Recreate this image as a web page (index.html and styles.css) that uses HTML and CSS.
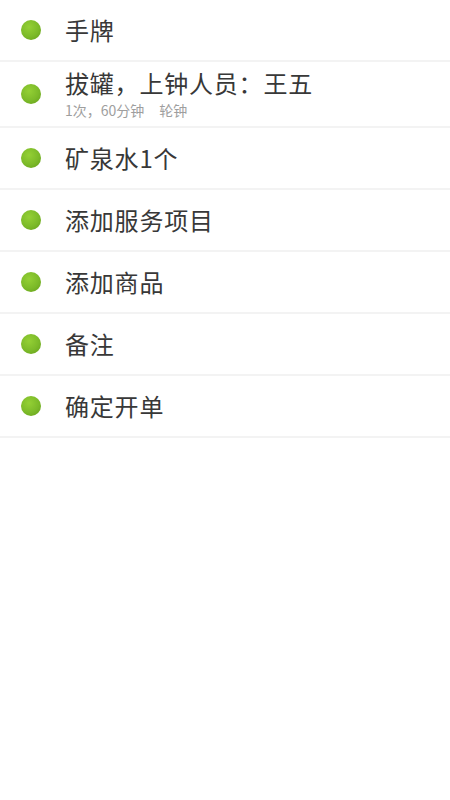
FILE: index.html
```html
<!DOCTYPE html>
<html lang="zh">
<head>
<meta charset="utf-8">
<link rel="stylesheet" href="styles.css">
</head>
<body>
<ul class="list">
  <li class="row"><span class="dot"></span><div class="text"><div class="title">手牌</div></div></li>
  <li class="row row-tall"><span class="dot"></span><div class="text"><div class="title">拔罐，上钟人员：王五</div><div class="sub"><span>1次，60分钟</span><span class="sub-gap">轮钟</span></div></div></li>
  <li class="row"><span class="dot"></span><div class="text"><div class="title">矿泉水1个</div></div></li>
  <li class="row"><span class="dot"></span><div class="text"><div class="title">添加服务项目</div></div></li>
  <li class="row"><span class="dot"></span><div class="text"><div class="title">添加商品</div></div></li>
  <li class="row"><span class="dot"></span><div class="text"><div class="title">备注</div></div></li>
  <li class="row"><span class="dot"></span><div class="text"><div class="title">确定开单</div></div></li>
</ul>
</body>
</html>
```

FILE: styles.css
```css
html, body {
  margin: 0;
  padding: 0;
  background: #ffffff;
  font-family: "Noto Sans CJK SC", "Noto Sans", sans-serif;
}
.list {
  list-style: none;
  margin: 0;
  padding: 0;
}
.row {
  display: flex;
  align-items: center;
  min-height: 60px;
  padding-left: 21px;
  border-bottom: 2px solid #f3f3f3;
  box-sizing: content-box;
}
.row-tall {
  min-height: 64px;
}
.dot {
  flex: none;
  width: 20px;
  height: 20px;
  border-radius: 50%;
  background: radial-gradient(circle at 40% 35%, #94d035 0%, #7cba29 55%, #629d18 100%);
  margin-right: 24px;
}
.text {
  display: flex;
  flex-direction: column;
}
.title {
  font-size: 24px;
  line-height: 28px;
  color: #383838;
  letter-spacing: 0.8px;
}
.sub {
  font-size: 14px;
  line-height: 18px;
  color: #9e9e9e;
  margin-top: 4px;
}
.sub-gap {
  margin-left: 15px;
}
```
